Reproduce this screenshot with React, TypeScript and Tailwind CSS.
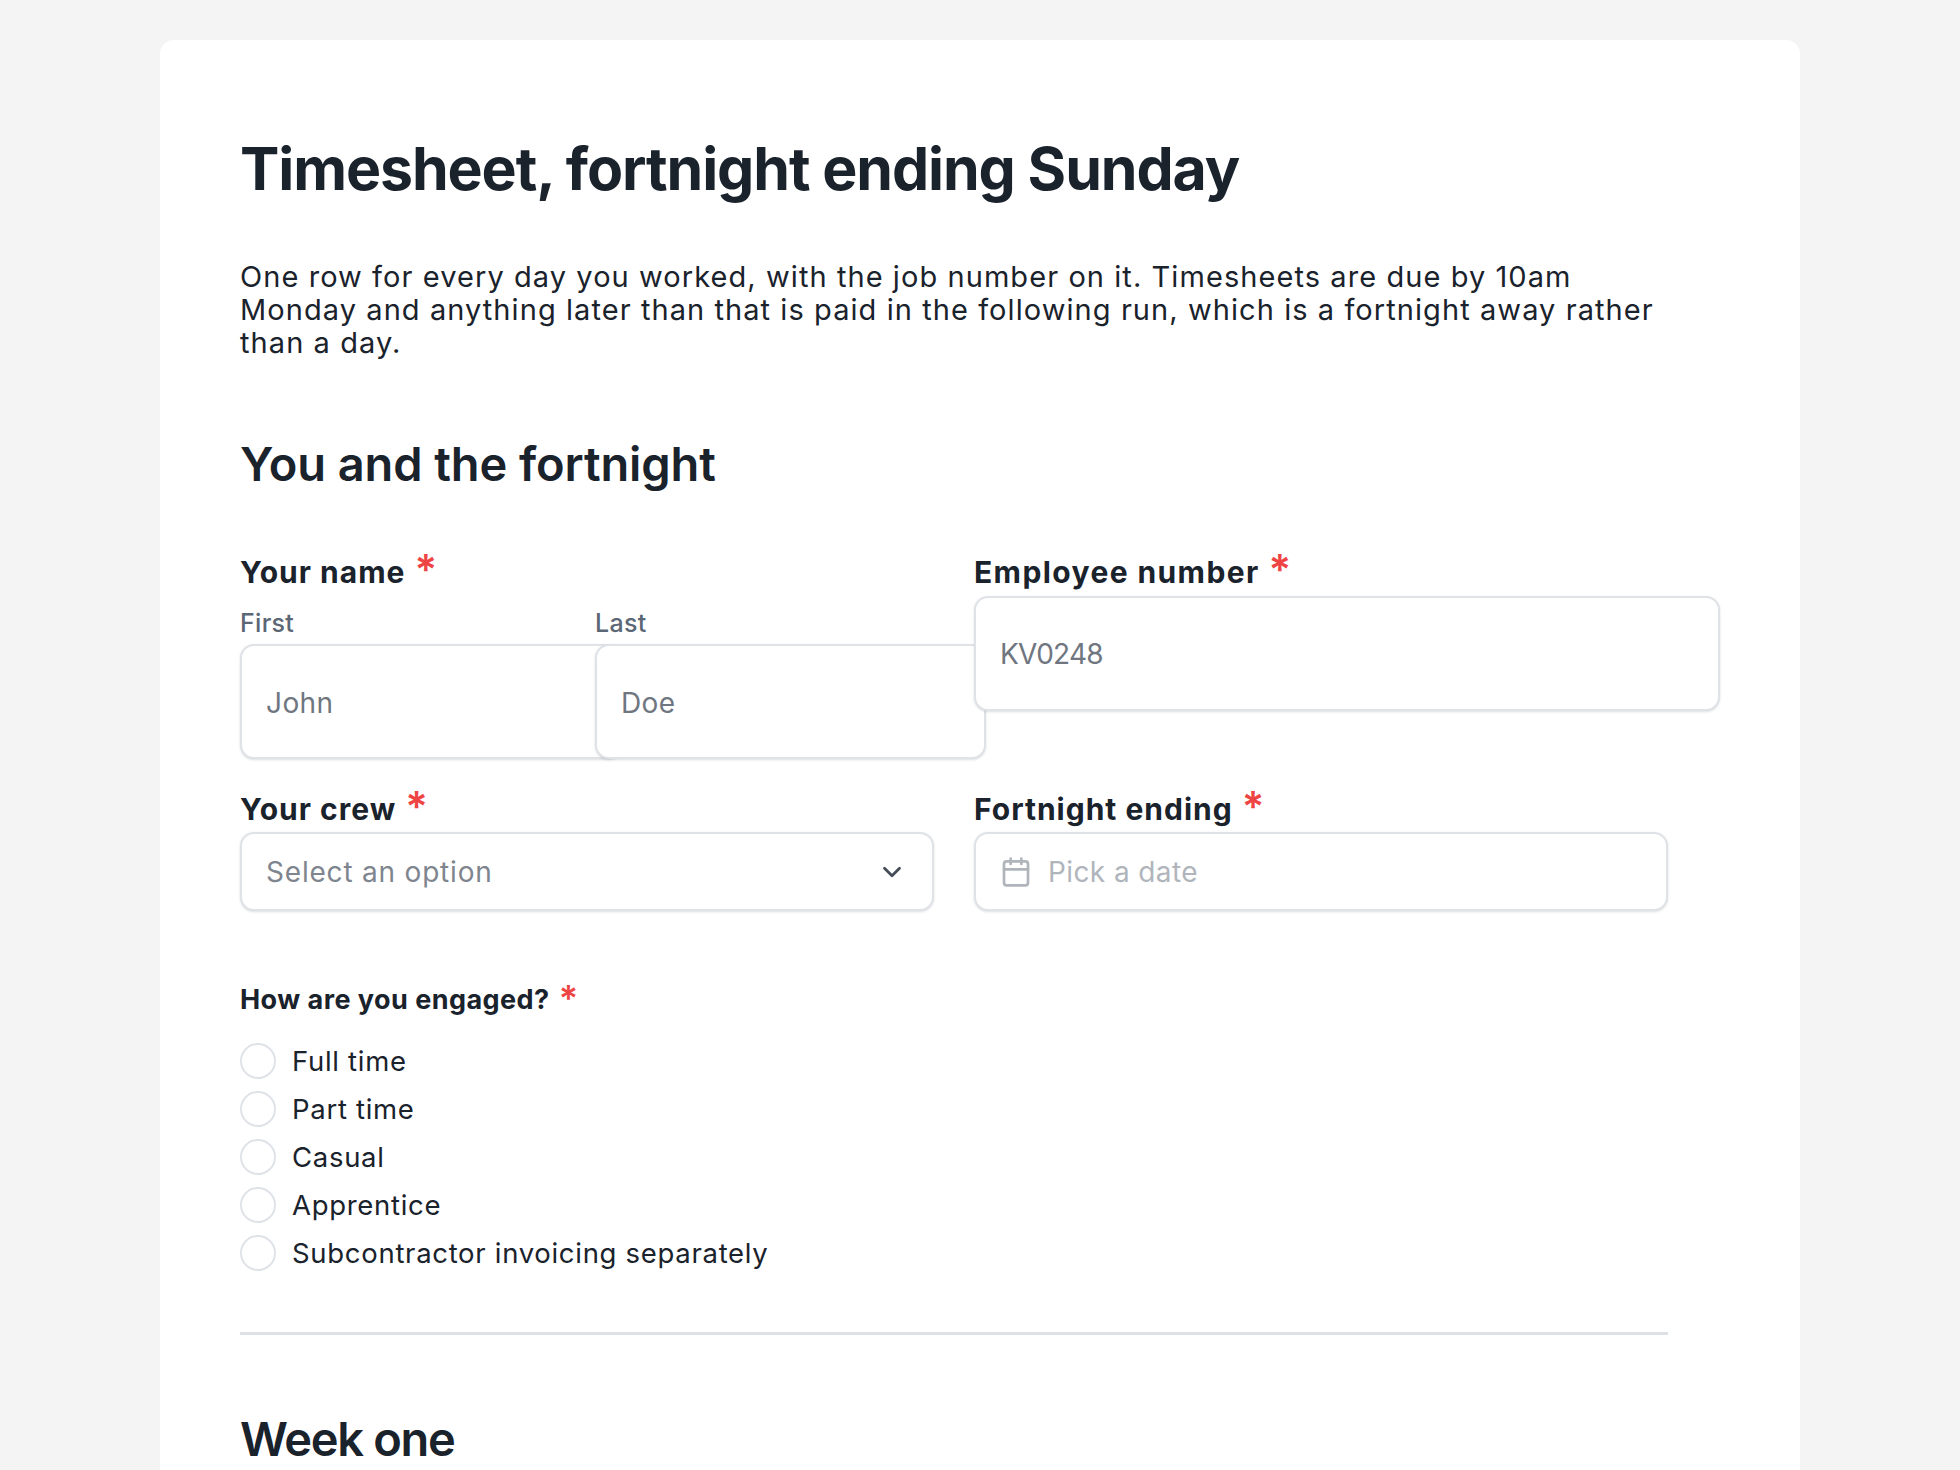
import { Calendar, ChevronDown } from "lucide-react"

const tiposVinculo = ["Full time", "Part time", "Casual", "Apprentice", "Subcontractor invoicing separately"]

function Required() {
  return <span className="ml-[9px] align-[-2px] text-[42px] font-semibold leading-[0] tracking-normal text-[#ef4444]">*</span>
}

function FieldLabel({ children, largo }: { children: string; largo?: boolean }) {
  return (
    <p className={`h-[40px] text-[30px] font-bold leading-[40px] text-[#1a222c] ${largo ? "tracking-[1.4px]" : "tracking-[1px]"}`}>
      {children}
      <Required />
    </p>
  )
}

export default function App() {
  return (
    <div className="h-[1470px] overflow-hidden bg-[#f4f4f5] px-[160px] pt-[40px] font-['Inter',sans-serif]">
      <main className="h-[1500px] w-[1640px] rounded-[14px] bg-white px-[80px] pt-[96px] text-[#1a222c]">
        <h1 className="text-[59px] font-bold leading-[66px] tracking-[-1.1px]">Timesheet, fortnight ending Sunday</h1>
        <p className="mt-[58px] w-[1428px] text-[29px] leading-[33px] tracking-[1.07px]">
          One row for every day you worked, with the job number on it. Timesheets are due by 10am Monday and anything
          later than that is paid in the following run, which is a fortnight away rather than a day.
        </p>
        <h2 className="mt-[78px] text-[47px] font-semibold leading-[53px] tracking-[-0.1px]">You and the fortnight</h2>

        <div className="mt-[62px] grid w-[1428px] grid-cols-[694px_694px] gap-x-[40px] gap-y-[30px]">
          <div className="h-[207px]">
            <FieldLabel>Your name</FieldLabel>
            <div className="flex">
              <div className="w-[355px]">
                <p className="mt-[16px] h-[36px] text-[25px] font-medium leading-[30px] tracking-[0.3px] text-[#5b6775]">First</p>
                <div className="flex h-[115px] w-[383px] items-center rounded-[14px] border-2 border-[#dfe3e8] bg-white pl-[24px] pt-[2px] text-[28px] tracking-[0.4px] text-[#6f7680] shadow-sm">
                  John
                </div>
              </div>
              <div className="relative w-[391px] shrink-0">
                <p className="mt-[16px] h-[36px] text-[25px] font-medium leading-[30px] tracking-[0.3px] text-[#5b6775]">Last</p>
                <div className="flex h-[115px] items-center rounded-[14px] border-2 border-[#dfe3e8] bg-white pl-[24px] pt-[2px] text-[28px] tracking-[0.4px] text-[#6f7680] shadow-sm">
                  Doe
                </div>
              </div>
            </div>
          </div>
          <div className="relative h-[207px]">
            <FieldLabel largo>Employee number</FieldLabel>
            <div className="mt-[4px] flex h-[115px] w-[746px] items-center rounded-[14px] border-2 border-[#dfe3e8] bg-white pl-[24px] text-[28px] tracking-[-0.8px] text-[#6f7680] shadow-sm">
              KV0248
            </div>
          </div>

          <div>
            <FieldLabel>Your crew</FieldLabel>
            <div className="mt-[3px] flex h-[79px] items-center justify-between rounded-[14px] border-2 border-[#dfe3e8] bg-white pl-[24px] pr-[25px] text-[28px] tracking-[0.8px] text-[#7e858e] shadow-sm">
              Select an option
              <ChevronDown size={30} strokeWidth={2.2} className="text-[#434c57]" />
            </div>
          </div>
          <div>
            <FieldLabel>Fortnight ending</FieldLabel>
            <div className="mt-[3px] flex h-[79px] items-center gap-[16px] rounded-[14px] border-2 border-[#dfe3e8] bg-white pl-[24px] text-[28px] tracking-[0.4px] text-[#b0b5bb] shadow-sm">
              <Calendar size={32} strokeWidth={2} className="text-[#b0b5bb]" />
              Pick a date
            </div>
          </div>
        </div>

        <p className="mt-[71px] h-[36px] text-[27px] font-bold leading-[36px] tracking-[0.45px] text-[#1a222c]">
          How are you engaged?
          <span className="ml-[9px] align-[-2px] text-[36px] font-semibold leading-[0] text-[#ef4444]">*</span>
        </p>
        <div className="mt-[25px] flex flex-col gap-[12px]">
          {tiposVinculo.map((tipo) => (
            <label key={tipo} className="flex h-[36px] items-center gap-[16px] text-[27.5px] leading-[36px] tracking-[0.7px]">
              <span className="h-[36px] w-[36px] rounded-full border-2 border-[#dfe3e8] bg-white" />
              {tipo}
            </label>
          ))}
        </div>

        <hr className="mt-[61px] h-[3px] w-[1428px] border-0 bg-[#dde1e6]" />

        <h2 className="mt-[77px] text-[47px] font-semibold leading-[53px] tracking-[-1.3px]">Week one</h2>
      </main>
    </div>
  )
}
